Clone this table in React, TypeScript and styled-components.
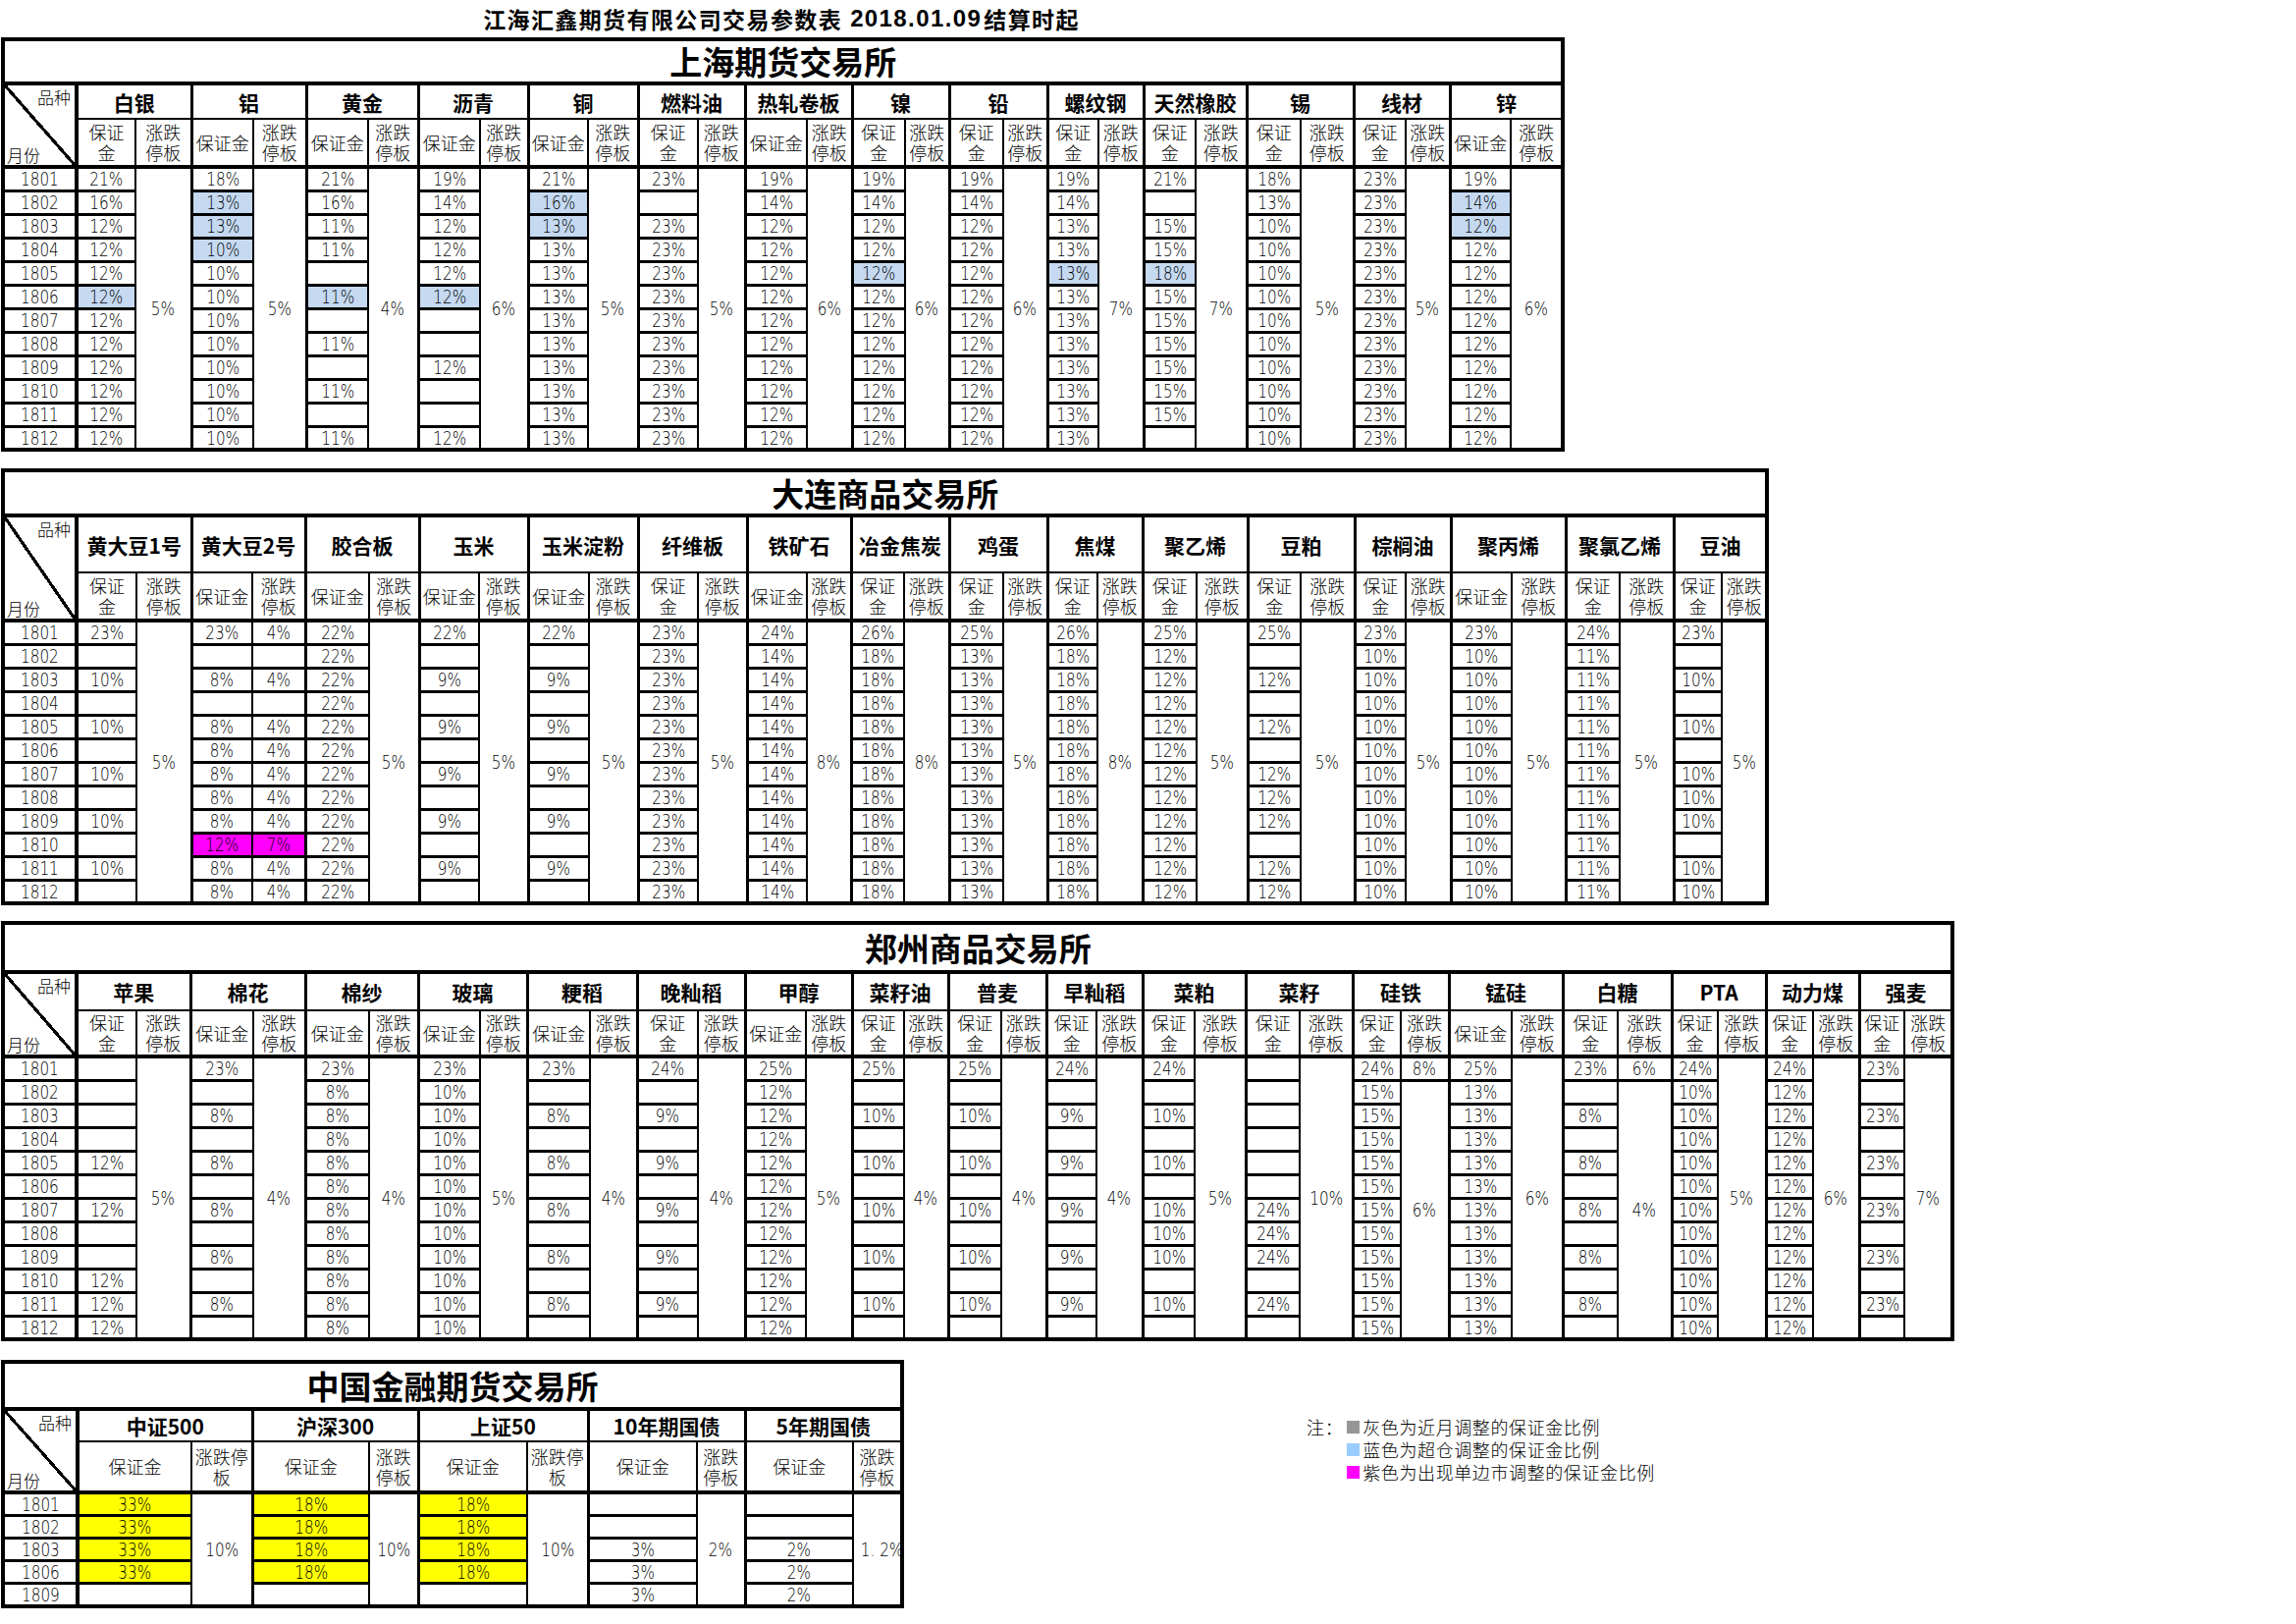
import React from 'react';
import styled, { createGlobalStyle } from 'styled-components';

const CJK = `"Noto Sans CJK SC", "Noto Sans", sans-serif`;
const NUM = `"DejaVu Sans", "Liberation Sans", "Noto Sans CJK SC", sans-serif`;

type Tone = 'blue' | 'pink' | 'yellow';
type Limit =
  | { kind: 'merged'; v: string }
  | { kind: 'split'; first: string; rest: string }
  | { kind: 'rows'; v: string };

interface Item {
  n: string;
  w: [number, number];
  wide?: boolean;
  d: string;
  l: Limit;
  ll?: string;
}

interface Sizes {
  title: number;
  head: number;
  sub: number;
  row: number;
}

const toneColor: Record<Tone, string> = {
  blue: '#c5d9f1',
  pink: '#ff00ff',
  yellow: '#ffff00',
};

const M = (v: string): Limit => ({ kind: 'merged', v });
const S = (first: string, rest: string): Limit => ({ kind: 'split', first, rest });
const R = (v: string): Limit => ({ kind: 'rows', v });

// first value then the same value for the other 11 months
const fill = (first: string, v: string) => [first, ...Array(11).fill(v)].join(' ');
// first value, then every second month
const alt = (first: string, v: string) =>
  [first, '-', v, '-', v, '-', v, '-', v, '-', v, '-'].join(' ');

const pct = (v: string) => (v.includes('%') ? v : v + '%');

function parse(tok: string): { text: string; tone?: Tone } {
  if (tok === '-') return { text: '' };
  const last = tok.slice(-1);
  const tone: Tone | undefined =
    last === 'b' ? 'blue' : last === 'm' ? 'pink' : last === 'y' ? 'yellow' : undefined;
  const num = tone ? tok.slice(0, -1) : tok;
  return { text: pct(num), tone };
}

const MONTHS = ['1801', '1802', '1803', '1804', '1805', '1806', '1807', '1808', '1809', '1810', '1811', '1812'];

const SHANGHAI: Item[] = [
  { n: '白银', w: [60, 57], d: '21 16 12 12 12 12b 12 12 12 12 12 12', l: M('5') },
  { n: '铝', w: [63, 54], wide: true, d: '18 13b 13b 10b 10 10 10 10 10 10 10 10', l: M('5') },
  { n: '黄金', w: [63, 51], wide: true, d: '21 16 11 11 - 11b - 11 - 11 - 11', l: M('4') },
  { n: '沥青', w: [63, 49], wide: true, d: '19 14 12 12 12 12b - - 12 - - 12', l: M('6') },
  { n: '铜', w: [61, 51], wide: true, d: '21 16b 13b 13 13 13 13 13 13 13 13 13', l: M('5') },
  { n: '燃料油', w: [61, 48], d: '23 - 23 23 23 23 23 23 23 23 23 23', l: M('5') },
  { n: '热轧卷板', w: [63, 46], wide: true, d: fill('19', '12').replace('19 12', '19 14'), l: M('6') },
  { n: '镍', w: [54, 45], d: '19 14 12 12 12b 12 12 12 12 12 12 12', l: M('6') },
  { n: '铅', w: [55, 45], d: fill('19', '12').replace('19 12', '19 14'), l: M('6') },
  { n: '螺纹钢', w: [52, 46], d: '19 14 13 13 13b 13 13 13 13 13 13 13', l: M('7') },
  { n: '天然橡胶', w: [53, 52], d: '21 - 15 15 18b 15 15 15 15 15 15 -', l: M('7') },
  { n: '锡', w: [55, 54], d: fill('18', '10').replace('18 10', '18 13'), l: M('5') },
  { n: '线材', w: [53, 45], d: fill('23', '23'), l: M('5') },
  { n: '锌', w: [62, 53], wide: true, d: '19 14b 12b 12 12 12 12 12 12 12 12 12', l: M('6') },
];

const DALIAN: Item[] = [
  { n: '黄大豆1号', w: [61, 56], d: alt('23', '10'), l: M('5') },
  { n: '黄大豆2号', w: [62, 54], wide: true, d: '23 - 8 - 8 8 8 8 8 12m 8 8', l: R('4 - 4 - 4 4 4 4 4 7m 4 4') },
  { n: '胶合板', w: [65, 51], wide: true, d: fill('22', '22'), l: M('5') },
  { n: '玉米', w: [61, 50], wide: true, d: alt('22', '9'), l: M('5') },
  { n: '玉米淀粉', w: [62, 50], wide: true, d: alt('22', '9'), l: M('5') },
  { n: '纤维板', w: [61, 50], d: fill('23', '23'), l: M('5') },
  { n: '铁矿石', w: [61, 45], wide: true, d: fill('24', '14'), l: M('8') },
  { n: '冶金焦炭', w: [54, 46], d: fill('26', '18'), l: M('8') },
  { n: '鸡蛋', w: [55, 45], d: fill('25', '13'), l: M('5') },
  { n: '焦煤', w: [51, 46], d: fill('26', '18'), l: M('8') },
  { n: '聚乙烯', w: [55, 52], d: fill('25', '12'), l: M('5') },
  { n: '豆粕', w: [54, 55], d: '25 - 12 - 12 - 12 12 12 - 12 12', l: M('5') },
  { n: '棕榈油', w: [52, 46], d: fill('23', '10'), l: M('5') },
  { n: '聚丙烯', w: [62, 55], wide: true, d: fill('23', '10'), l: M('5') },
  { n: '聚氯乙烯', w: [55, 55], d: fill('24', '11'), l: M('5') },
  { n: '豆油', w: [49, 46], d: '23 - 10 - 10 - 10 10 10 - 10 10', l: M('5') },
];

const ZHENGZHOU: Item[] = [
  { n: '苹果', w: [61, 55], d: '- - - - 12 - 12 - - 12 12 12', l: M('5') },
  { n: '棉花', w: [64, 53], wide: true, d: alt('23', '8'), l: M('4') },
  { n: '棉纱', w: [65, 50], wide: true, d: fill('23', '8'), l: M('4') },
  { n: '玻璃', w: [63, 48], wide: true, d: fill('23', '10'), l: M('5') },
  { n: '粳稻', w: [64, 48], wide: true, d: alt('23', '8'), l: M('4') },
  { n: '晚籼稻', w: [62, 48], d: alt('24', '9'), l: M('4') },
  { n: '甲醇', w: [62, 47], wide: true, d: fill('25', '12'), l: M('5') },
  { n: '菜籽油', w: [53, 45], d: alt('25', '10'), l: M('4') },
  { n: '普麦', w: [54, 46], d: alt('25', '10'), l: M('4') },
  { n: '早籼稻', w: [51, 47], d: alt('24', '9'), l: M('4') },
  { n: '菜粕', w: [53, 52], d: '24 - 10 - 10 - 10 10 10 - 10 -', l: M('5') },
  { n: '菜籽', w: [55, 54], d: '- - - - - - 24 24 24 - 24 -', l: M('10') },
  { n: '硅铁', w: [49, 49], d: fill('24', '15'), l: S('8', '6') },
  { n: '锰硅', w: [64, 52], wide: true, d: fill('25', '13'), l: M('6') },
  { n: '白糖', w: [56, 55], d: alt('23', '8'), l: S('6', '4') },
  { n: 'PTA', w: [47, 49], d: fill('24', '10'), l: M('5') },
  { n: '动力煤', w: [48, 47], d: fill('24', '12'), l: M('6') },
  { n: '强麦', w: [46, 49], d: alt('23', '23'), l: M('7') },
];

const CFFEX: Item[] = [
  { n: '中证500', w: [116, 62], wide: true, d: '33y 33y 33y 33y -', l: M('10'), ll: '涨跌停\n板' },
  { n: '沪深300', w: [119, 50], wide: true, d: '18y 18y 18y 18y -', l: M('10') },
  { n: '上证50', w: [111, 62], wide: true, d: '18y 18y 18y 18y -', l: M('10'), ll: '涨跌停\n板' },
  { n: '10年期国债', w: [111, 49], wide: true, d: '- - 3 3 3', l: M('2') },
  { n: '5年期国债', w: [110, 50], wide: true, d: '- - 2 2 2', l: M('1. 2%') },
];

const GlobalStyle = createGlobalStyle`
  html, body {
    margin: 0;
    padding: 0;
    background: #fff;
    color: #000;
    font-family: ${CJK};
  }
`;

const Page = styled.div`
  width: 2339px;
  min-height: 1654px;
  padding-left: 1px;
  box-sizing: border-box;
`;

const DocTitle = styled.div`
  width: 1590px;
  height: 38px;
  display: flex;
  align-items: center;
  justify-content: center;
  font-family: ${CJK};
  font-weight: 700;
  font-size: 23px;
  letter-spacing: 1.4px;
`;

const DocDate = styled.span`
  font-family: "Liberation Sans", sans-serif;
  font-weight: 700;
  font-size: 24px;
  margin: 0 2px 0 8px;
`;

const Section = styled.div<{ $gap: number }>`
  margin-bottom: ${(p) => p.$gap}px;
`;

const Table = styled.table<{ $w: number }>`
  border-collapse: collapse;
  table-layout: fixed;
  width: ${(p) => p.$w}px;
  border: 4px solid #000;
`;

const Col = styled.col<{ $w: number }>`
  width: ${(p) => p.$w}px;
`;

const Row = styled.tr<{ $h: number }>`
  height: ${(p) => p.$h}px;
`;

const ExchangeTitle = styled.th`
  padding: 0;
  border-bottom: 4px solid #000;
  font-family: ${CJK};
  font-weight: 700;
  font-size: 33px;
  line-height: 1;
  text-align: center;
`;

const Corner = styled.th`
  padding: 0;
  border-right: 4px solid #000;
  border-bottom: 4px solid #000;
  vertical-align: top;
  background: linear-gradient(
    to bottom left,
    transparent calc(50% - 1.6px),
    #000 calc(50% - 1.6px),
    #000 calc(50% + 1.6px),
    transparent calc(50% + 1.6px)
  );
`;

const CornerInner = styled.div<{ $h: number }>`
  height: ${(p) => p.$h}px;
  display: flex;
  flex-direction: column;
  justify-content: space-between;
  font-family: ${CJK};
  font-weight: 300;
  font-size: 17px;
  line-height: 20px;
`;

const CornerTop = styled.span`
  align-self: flex-end;
  padding: 2px 4px 0 0;
`;

const CornerBottom = styled.span`
  align-self: flex-start;
  padding: 0 0 0 2px;
`;

const GroupHead = styled.th`
  padding: 0;
  border-left: 3px solid #000;
  border-right: 3px solid #000;
  border-bottom: 2px solid #000;
  font-family: ${CJK};
  font-weight: 700;
  font-size: 21px;
  white-space: nowrap;
  text-align: center;
`;

const SubHead = styled.th<{ $limit?: boolean }>`
  padding: 0;
  border-left: ${(p) => (p.$limit ? 2 : 3)}px solid #000;
  border-right: ${(p) => (p.$limit ? 3 : 2)}px solid #000;
  border-bottom: 4px solid #000;
  font-family: ${CJK};
  font-weight: 300;
  font-size: 18px;
  line-height: 21px;
  white-space: pre-line;
  text-align: center;
  overflow: hidden;
`;

const MonthCell = styled.td`
  padding: 0;
  border-top: 3px solid #000;
  border-bottom: 3px solid #000;
  border-right: 4px solid #000;
  line-height: 1;
  text-align: center;
`;

const MarginCell = styled.td<{ $tone?: Tone }>`
  padding: 0;
  border-top: 3px solid #000;
  border-bottom: 3px solid #000;
  border-left: 3px solid #000;
  border-right: 2px solid #000;
  background: ${(p) => (p.$tone ? toneColor[p.$tone] : '#fff')};
  line-height: 1;
  text-align: center;
`;

const LimitCell = styled.td<{ $tone?: Tone }>`
  padding: 0;
  border-top: 3px solid #000;
  border-bottom: 3px solid #000;
  border-left: 2px solid #000;
  border-right: 3px solid #000;
  background: ${(p) => (p.$tone ? toneColor[p.$tone] : '#fff')};
  line-height: 1;
  text-align: center;
  vertical-align: middle;
  white-space: nowrap;
`;

// narrow, thin figures as in the printed sheet
const Num = styled.span`
  display: inline-block;
  font-family: ${NUM};
  font-weight: 200;
  font-size: 20px;
  line-height: 1;
  white-space: nowrap;
  transform: scaleX(0.76);
`;

const BottomRow = styled.div`
  display: flex;
  align-items: flex-start;
`;

const Legend = styled.div`
  margin: 57px 0 0 410px;
  display: flex;
  gap: 4px;
  font-family: ${CJK};
  font-weight: 300;
  font-size: 18px;
  line-height: 23px;
  letter-spacing: 0.6px;
`;

const LegendList = styled.div`
  display: flex;
  flex-direction: column;
`;

const LegendItem = styled.div`
  display: flex;
  align-items: center;
  white-space: nowrap;
`;

const Swatch = styled.span<{ $c: string }>`
  width: 13px;
  height: 13px;
  margin-right: 3px;
  background: ${(p) => p.$c};
`;

function limitCell(l: Limit, r: number, n: number, key: string) {
  if (l.kind === 'merged') {
    return r === 0 ? (
      <LimitCell key={key} rowSpan={n}>
        <Num>{pct(l.v)}</Num>
      </LimitCell>
    ) : null;
  }
  if (l.kind === 'split') {
    if (r === 0)
      return (
        <LimitCell key={key}>
          <Num>{pct(l.first)}</Num>
        </LimitCell>
      );
    if (r === 1)
      return (
        <LimitCell key={key} rowSpan={n - 1}>
          <Num>{pct(l.rest)}</Num>
        </LimitCell>
      );
    return null;
  }
  const c = parse(l.v.split(' ')[r]);
  return (
    <LimitCell key={key} $tone={c.tone}>
      <Num>{c.text}</Num>
    </LimitCell>
  );
}

function Exchange({
  title,
  months,
  items,
  sizes,
  gap,
}: {
  title: string;
  months: string[];
  items: Item[];
  sizes: Sizes;
  gap: number;
}) {
  const monthW = items.length === 5 ? 76 : 75;
  const width = items.reduce((s, it) => s + it.w[0] + it.w[1], monthW);
  const cols = items.map((it) => it.d.split(' ').map(parse));

  return (
    <Section $gap={gap}>
      <Table $w={width}>
        <colgroup>
          <Col $w={monthW} />
          {items.map((it) => (
            <React.Fragment key={it.n}>
              <Col $w={it.w[0]} />
              <Col $w={it.w[1]} />
            </React.Fragment>
          ))}
        </colgroup>
        <thead>
          <Row $h={sizes.title}>
            <ExchangeTitle colSpan={items.length * 2 + 1}>{title}</ExchangeTitle>
          </Row>
          <Row $h={sizes.head}>
            <Corner rowSpan={2}>
              <CornerInner $h={sizes.head + sizes.sub - 4}>
                <CornerTop>品种</CornerTop>
                <CornerBottom>月份</CornerBottom>
              </CornerInner>
            </Corner>
            {items.map((it) => (
              <GroupHead key={it.n} colSpan={2}>
                {it.n}
              </GroupHead>
            ))}
          </Row>
          <Row $h={sizes.sub}>
            {items.map((it) => (
              <React.Fragment key={it.n}>
                <SubHead>{it.wide ? '保证金' : '保证\n金'}</SubHead>
                <SubHead $limit>{it.ll ?? '涨跌\n停板'}</SubHead>
              </React.Fragment>
            ))}
          </Row>
        </thead>
        <tbody>
          {months.map((m, r) => (
            <Row key={m} $h={sizes.row}>
              <MonthCell>
                <Num>{m}</Num>
              </MonthCell>
              {items.map((it, i) => (
                <React.Fragment key={it.n}>
                  <MarginCell $tone={cols[i][r].tone}>
                    <Num>{cols[i][r].text}</Num>
                  </MarginCell>
                  {limitCell(it.l, r, months.length, it.n + '-l')}
                </React.Fragment>
              ))}
            </Row>
          ))}
        </tbody>
      </Table>
    </Section>
  );
}

export default function App() {
  return (
    <>
      <GlobalStyle />
      <Page>
        <DocTitle>
          江海汇鑫期货有限公司交易参数表<DocDate>2018.01.09</DocDate>结算时起
        </DocTitle>
        <Exchange
          title="上海期货交易所"
          months={MONTHS}
          items={SHANGHAI}
          sizes={{ title: 45, head: 36, sub: 49, row: 24 }}
          gap={17}
        />
        <Exchange
          title="大连商品交易所"
          months={MONTHS}
          items={DALIAN}
          sizes={{ title: 46, head: 58, sub: 49, row: 24 }}
          gap={16}
        />
        <Exchange
          title="郑州商品交易所"
          months={MONTHS}
          items={ZHENGZHOU}
          sizes={{ title: 50, head: 39, sub: 47, row: 24 }}
          gap={19}
        />
        <BottomRow>
          <Exchange
            title="中国金融期货交易所"
            months={['1801', '1802', '1803', '1806', '1809']}
            items={CFFEX}
            sizes={{ title: 48, head: 33, sub: 52, row: 23 }}
            gap={0}
          />
          <Legend>
            <span>注：</span>
            <LegendList>
              <LegendItem>
                <Swatch $c="#969696" />
                灰色为近月调整的保证金比例
              </LegendItem>
              <LegendItem>
                <Swatch $c="#99ccff" />
                蓝色为超仓调整的保证金比例
              </LegendItem>
              <LegendItem>
                <Swatch $c="#ff00ff" />
                紫色为出现单边市调整的保证金比例
              </LegendItem>
            </LegendList>
          </Legend>
        </BottomRow>
      </Page>
    </>
  );
}
